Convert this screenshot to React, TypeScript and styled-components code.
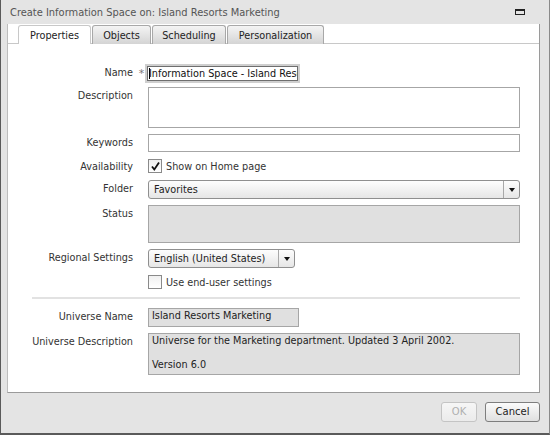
import React from 'react';
import styled, { createGlobalStyle, css } from 'styled-components';

const GlobalStyle = createGlobalStyle`
  html, body {
    margin: 0;
    padding: 0;
    background: #e4e4e4;
  }
  * {
    box-sizing: border-box;
  }
`;

const Window = styled.div`
  width: 550px;
  height: 435px;
  display: flex;
  flex-direction: column;
  background: #e4e4e4;
  border-left: 1px solid #5a5a5a;
  border-bottom: 2px solid #5a5a5a;
  border-right: 1px solid #8a8a8a;
  font-family: 'DejaVu Sans', sans-serif;
  font-size: 9.7px;
  color: #333;
  overflow: hidden;
`;

const TitleBar = styled.div`
  height: 24px;
  display: flex;
  align-items: center;
  justify-content: space-between;
  padding: 0 24px 0 9px;
  color: #555;
  font-size: 9.9px;
`;

const MaxIcon = styled.div`
  width: 10px;
  height: 6px;
  border: 1px solid #222;
  border-top-width: 2px;
  margin-top: -1px;
`;

const Body = styled.div`
  margin: 0 9px 0 6px;
  height: 369px;
  background: #fff;
  border-right: 1px solid #9a9a9a;
  border-bottom: 1px solid #9a9a9a;
  border-left: 1px solid #bdbdbd;
  display: flex;
  flex-direction: column;
`;

const TabStrip = styled.div`
  display: flex;
  height: 19px;
  padding-left: 10px;
  margin-top: 1px;
  border-bottom: 1px solid #c8c8c8;
  background: #fff;
`;

const Tab = styled.div<{ active?: boolean; width: number }>`
  display: flex;
  align-items: center;
  justify-content: center;
  width: ${({ width }) => width}px;
  height: 19px;
  border: 1px solid #a8a8a8;
  border-bottom: none;
  border-radius: 3px 3px 0 0;
  margin-right: 1px;
  color: #222;
  ${({ active }) =>
    active
      ? css`
          background: #fff;
          margin-bottom: -1px;
          border-color: #c8c8c8;
        `
      : css`
          background: linear-gradient(#f4f4f4, #d4d4d4);
        `}
`;

const Form = styled.div`
  display: grid;
  grid-template-columns: 125px 15px 372px;
  row-gap: 6px;
  padding-top: 20px;
  align-items: start;
`;

const Label = styled.div`
  text-align: right;
  padding-top: 3px;
  line-height: 12px;
  white-space: nowrap;
`;

const Marker = styled.div`
  text-align: center;
  color: #777;
  font-size: 11px;
  padding-top: 3px;
  padding-left: 2px;
`;

const Field = styled.div<{ w?: number; h: number; disabled?: boolean }>`
  width: ${({ w }) => (w ? `${w}px` : '100%')};
  height: ${({ h }) => h}px;
  border: 1px solid #a6a6a6;
  background: ${({ disabled }) => (disabled ? '#e0e0e0' : '#fff')};
  padding: 1px 3px;
  line-height: 12px;
  color: #222;
  overflow: hidden;
  white-space: pre-wrap;
`;

const FocusField = styled.div`
  width: 151px;
  height: 15px;
  border: 1px solid #6e6e6e;
  box-shadow: 0 0 0 2px #cfcfcf;
  margin-left: -1px;
  margin-top: 2px;
  background: #fff;
  padding: 0 1px;
  line-height: 13px;
  white-space: nowrap;
  overflow: hidden;
  color: #111;
`;

const Caret = styled.span`
  border-left: 1px solid #000;
  margin-right: -1px;
`;

const CheckRow = styled.label`
  display: flex;
  align-items: center;
  gap: 4px;
  height: 16px;
`;

const Box = styled.span`
  width: 14px;
  height: 14px;
  border: 1px solid #8a8a8a;
  background: linear-gradient(#f0f0f0, #fff);
  display: flex;
  align-items: center;
  justify-content: center;
`;

const Select = styled.div<{ w?: number }>`
  width: ${({ w }) => (w ? `${w}px` : '100%')};
  height: 19px;
  display: flex;
  border: 1px solid #8f8f8f;
  border-radius: 3px;
  background: linear-gradient(#fdfdfd, #e6e6e6);
  color: #222;
`;

const SelectText = styled.div`
  flex: 1;
  padding: 0 5px;
  line-height: 17px;
  white-space: nowrap;
`;

const SelectButton = styled.div`
  width: 16px;
  border-left: 1px solid #a8a8a8;
  display: flex;
  align-items: center;
  justify-content: center;
`;

const Arrow = styled.span`
  width: 0;
  height: 0;
  border-left: 3.5px solid transparent;
  border-right: 3.5px solid transparent;
  border-top: 4px solid #111;
`;

const Separator = styled.div`
  grid-column: 1 / 4;
  margin: 1px 0 3px 24px;
  width: 488px;
  border-top: 2px solid #e2e2e2;
`;

const Footer = styled.div`
  flex: 1;
  display: flex;
  justify-content: flex-end;
  align-items: center;
  gap: 8px;
  padding: 0 9px 3px 0;
`;

const Button = styled.button<{ w: number }>`
  width: ${({ w }) => w}px;
  height: 20px;
  border-radius: 3px;
  border: 1px solid #7e7e7e;
  background: linear-gradient(#fbfbfb, #e0e0e0);
  font-family: inherit;
  font-size: 10px;
  color: #222;
  padding: 0;
  &:disabled {
    border-color: #c4c4c4;
    color: #b0b0b0;
    background: linear-gradient(#f6f6f6, #ebebeb);
  }
`;

const CheckMark = () => (
  <svg width="11" height="11" viewBox="0 0 11 11">
    <path d="M2 5.5 L4.3 8.5 L9 1.5" fill="none" stroke="#111" strokeWidth="1.8" />
  </svg>
);

const Dropdown = ({ value, w }: { value: string; w?: number }) => (
  <Select w={w}>
    <SelectText>{value}</SelectText>
    <SelectButton>
      <Arrow />
    </SelectButton>
  </Select>
);

const tabs = [
  { name: 'Properties', width: 73, active: true },
  { name: 'Objects', width: 59 },
  { name: 'Scheduling', width: 74 },
  { name: 'Personalization', width: 97 },
];

const App = () => (
  <>
    <GlobalStyle />
    <Window>
      <TitleBar>
        <span>Create Information Space on: Island Resorts Marketing</span>
        <MaxIcon />
      </TitleBar>
      <Body>
        <TabStrip>
          {tabs.map((t) => (
            <Tab key={t.name} width={t.width} active={t.active}>
              {t.name}
            </Tab>
          ))}
        </TabStrip>
        <Form>
          <Label>Name</Label>
          <Marker>*</Marker>
          <FocusField>
            <Caret />
            Information Space - Island Resorts Marketing
          </FocusField>

          <Label>Description</Label>
          <span />
          <Field h={41} />

          <Label>Keywords</Label>
          <span />
          <Field h={18} />

          <Label>Availability</Label>
          <span />
          <CheckRow>
            <Box>
              <CheckMark />
            </Box>
            Show on Home page
          </CheckRow>

          <Label>Folder</Label>
          <span />
          <Dropdown value="Favorites" />

          <Label>Status</Label>
          <span />
          <Field h={38} disabled />

          <Label>Regional Settings</Label>
          <span />
          <Dropdown value="English (United States)" w={147} />

          <span />
          <span />
          <CheckRow>
            <Box />
            Use end-user settings
          </CheckRow>

          <Separator />

          <Label>Universe Name</Label>
          <span />
          <Field h={19} w={151} disabled>
            Island Resorts Marketing
          </Field>

          <Label>Universe Description</Label>
          <span />
          <Field h={42} disabled>
            {'Universe for the Marketing department. Updated 3 April 2002.\n\nVersion 6.0'}
          </Field>
        </Form>
      </Body>
      <Footer>
        <Button w={36} disabled>
          OK
        </Button>
        <Button w={55}>Cancel</Button>
      </Footer>
    </Window>
  </>
);

export default App;
